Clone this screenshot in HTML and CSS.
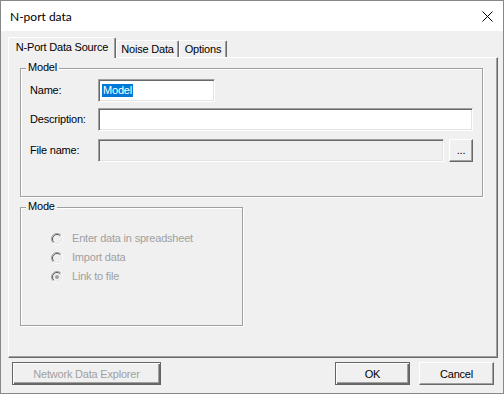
FILE: index.html
```html
<!DOCTYPE html>
<html lang="en">
<head>
  <meta charset="UTF-8">
  <title>N-port data</title>
  <link rel="stylesheet" href="styles.css">
</head>
<body>
  <div class="window">
    <div class="titlebar">
      <span class="title">N-port data</span>
      <svg class="close" width="11" height="11" viewBox="0 0 11 11">
        <path d="M0.5 0.5 L10.5 10.5 M10.5 0.5 L0.5 10.5" stroke="#000" stroke-width="1" fill="none"/>
      </svg>
    </div>

    <div class="content">
      <div class="tabs">
        <div class="tab active tab-source">N-Port Data Source</div>
        <div class="tab tab-noise">Noise Data</div>
        <div class="tab tab-options">Options</div>
      </div>

      <div class="panel">
        <div class="group group-model">
          <span class="group-title">Model</span>
          <div class="row">
            <label class="field-label">Name:</label>
            <div class="field field-name"><span class="sel">Model</span></div>
          </div>
          <div class="row row-desc">
            <label class="field-label">Description:</label>
            <div class="field field-wide"></div>
          </div>
          <div class="row row-file">
            <label class="field-label">File name:</label>
            <div class="field field-wide disabled"></div>
            <div class="btn btn-browse">...</div>
          </div>
        </div>

        <div class="group group-mode">
          <span class="group-title">Mode</span>
          <div class="radio-row">
            <svg class="radio" width="12" height="12" viewBox="0 0 12 12">
              <circle cx="6" cy="6" r="4.5" fill="#f0f0f0"/>
              <path d="M2.1 9.9 A5.5 5.5 0 0 1 9.9 2.1" stroke="#a0a0a0" fill="none"/>
              <path d="M9.9 2.1 A5.5 5.5 0 0 1 2.1 9.9" stroke="#fff" fill="none"/>
              <path d="M2.8 9.2 A4.5 4.5 0 0 1 9.2 2.8" stroke="#5a5a5a" fill="none"/>
              <path d="M9.2 2.8 A4.5 4.5 0 0 1 2.8 9.2" stroke="#e3e3e3" fill="none"/>
            </svg>
            <span class="radio-text">Enter data in spreadsheet</span>
          </div>
          <div class="radio-row">
            <svg class="radio" width="12" height="12" viewBox="0 0 12 12">
              <circle cx="6" cy="6" r="4.5" fill="#f0f0f0"/>
              <path d="M2.1 9.9 A5.5 5.5 0 0 1 9.9 2.1" stroke="#a0a0a0" fill="none"/>
              <path d="M9.9 2.1 A5.5 5.5 0 0 1 2.1 9.9" stroke="#fff" fill="none"/>
              <path d="M2.8 9.2 A4.5 4.5 0 0 1 9.2 2.8" stroke="#5a5a5a" fill="none"/>
              <path d="M9.2 2.8 A4.5 4.5 0 0 1 2.8 9.2" stroke="#e3e3e3" fill="none"/>
            </svg>
            <span class="radio-text">Import data</span>
          </div>
          <div class="radio-row">
            <svg class="radio" width="12" height="12" viewBox="0 0 12 12">
              <circle cx="6" cy="6" r="4.5" fill="#f0f0f0"/>
              <path d="M2.1 9.9 A5.5 5.5 0 0 1 9.9 2.1" stroke="#a0a0a0" fill="none"/>
              <path d="M9.9 2.1 A5.5 5.5 0 0 1 2.1 9.9" stroke="#fff" fill="none"/>
              <path d="M2.8 9.2 A4.5 4.5 0 0 1 9.2 2.8" stroke="#5a5a5a" fill="none"/>
              <path d="M9.2 2.8 A4.5 4.5 0 0 1 2.8 9.2" stroke="#e3e3e3" fill="none"/>
              <circle cx="6" cy="6" r="2" fill="#a0a0a0"/>
            </svg>
            <span class="radio-text">Link to file</span>
          </div>
        </div>
      </div>

      <div class="buttons">
        <div class="btn btn-framed btn-explorer disabled">Network Data Explorer</div>
        <div class="spacer"></div>
        <div class="btn btn-framed btn-ok">OK</div>
        <div class="btn btn-cancel">Cancel</div>
      </div>
    </div>
  </div>
</body>
</html>
```

FILE: styles.css
```css
* {
  box-sizing: border-box;
}
body {
  margin: 0;
  background: #fff;
  font-family: "Liberation Sans", Arial, sans-serif;
  font-size: 11px;
  letter-spacing: -0.2px;
  color: #000;
}
.window {
  width: 504px;
  height: 394px;
  border: 1px solid #888;
  background: #f0f0f0;
  display: flex;
  flex-direction: column;
}
.titlebar {
  height: 30px;
  background: #fff;
  display: flex;
  align-items: center;
  justify-content: space-between;
  padding: 0 10px 0 9px;
}
.title {
  font-family: Lato, "Noto Sans", sans-serif;
  font-size: 12px;
  letter-spacing: 0;
}
.close {
  display: block;
}
.content {
  flex: 1;
  display: flex;
  flex-direction: column;
  padding: 6px 5px 0 7px;
}

/* tabs */
.tabs {
  display: flex;
  height: 20px;
  position: relative;
  z-index: 1;
}
.tab {
  background: #f0f0f0;
  border-top: 1px solid #fff;
  border-left: 1px solid #fff;
  border-right: 1px solid #696969;
  box-shadow: inset -1px 0 0 #a0a0a0;
  border-radius: 2px 2px 0 0;
  display: flex;
  align-items: center;
  justify-content: center;
  margin-top: 3px;
  height: 17px;
}
.tab.active {
  margin-top: 0;
  height: 21px;
  padding-bottom: 2px;
}
.tab-source {
  width: 108px;
}
.tab-noise {
  width: 63px;
}
.tab-options {
  width: 48px;
}

.panel {
  height: 301px;
  border-top: 1px solid #fff;
  border-left: 1px solid #fff;
  border-right: 1px solid #696969;
  border-bottom: 1px solid #696969;
  box-shadow: inset -1px -1px 0 #a0a0a0;
  padding: 10px 0 0 11px;
}

/* group boxes */
.group {
  position: relative;
  border: 1px solid #a0a0a0;
  box-shadow: inset 1px 1px 0 #fff, 1px 1px 0 #fff;
}
.group-title {
  position: absolute;
  top: -8px;
  left: 5px;
  padding: 0 2px;
  line-height: 13px;
  background: #f0f0f0;
}
.group-model {
  width: 463px;
  height: 129px;
  padding: 10px 9px 0 9px;
}
.group-mode {
  width: 223px;
  height: 119px;
  margin-top: 10px;
  padding: 21px 0 0 30px;
}

/* fields */
.row {
  display: flex;
  align-items: center;
  height: 23px;
}
.row-desc {
  margin-top: 6px;
}
.row-file {
  margin-top: 8px;
}
.field-label {
  width: 68px;
  flex-shrink: 0;
  padding-bottom: 2px;
}
.field {
  height: 23px;
  background: #fff;
  border: 1px solid;
  border-color: #a0a0a0 #fff #fff #a0a0a0;
  box-shadow: inset 1px 1px 0 #696969, inset -1px -1px 0 #e3e3e3;
  display: flex;
  align-items: center;
  padding-left: 3px;
  padding-bottom: 1px;
}
.field-name {
  width: 117px;
}
.field-wide {
  flex: 1;
}
.field.disabled {
  background: #f0f0f0;
}
.sel {
  background: #0078d7;
  color: #fff;
  line-height: 13px;
  padding: 0 1px;
}

/* radios */
.radio-row {
  display: flex;
  align-items: center;
  height: 19px;
}
.radio {
  display: block;
  flex-shrink: 0;
}
.radio-text {
  margin-left: 9px;
  color: #a0a0a0;
  padding-bottom: 1px;
}

/* buttons */
.btn {
  height: 23px;
  background: #f0f0f0;
  border: 1px solid;
  border-color: #fff #696969 #696969 #fff;
  box-shadow: inset -1px -1px 0 #a0a0a0;
  display: flex;
  align-items: center;
  justify-content: center;
}
.btn-framed {
  border-color: #646464;
  box-shadow: inset 1px 1px 0 #fff, inset -1px -1px 0 #696969, inset -2px -2px 0 #a0a0a0;
}
.btn.disabled {
  color: #a0a0a0;
}
.btn-browse {
  width: 24px;
  margin-left: 5px;
  padding-bottom: 2px;
}
.buttons {
  display: flex;
  margin-top: 4px;
  padding: 0 4px;
}
.spacer {
  flex: 1;
}
.btn-explorer {
  width: 149px;
}
.btn-ok {
  width: 75px;
}
.btn-cancel {
  width: 75px;
  margin-left: 9px;
}
```
